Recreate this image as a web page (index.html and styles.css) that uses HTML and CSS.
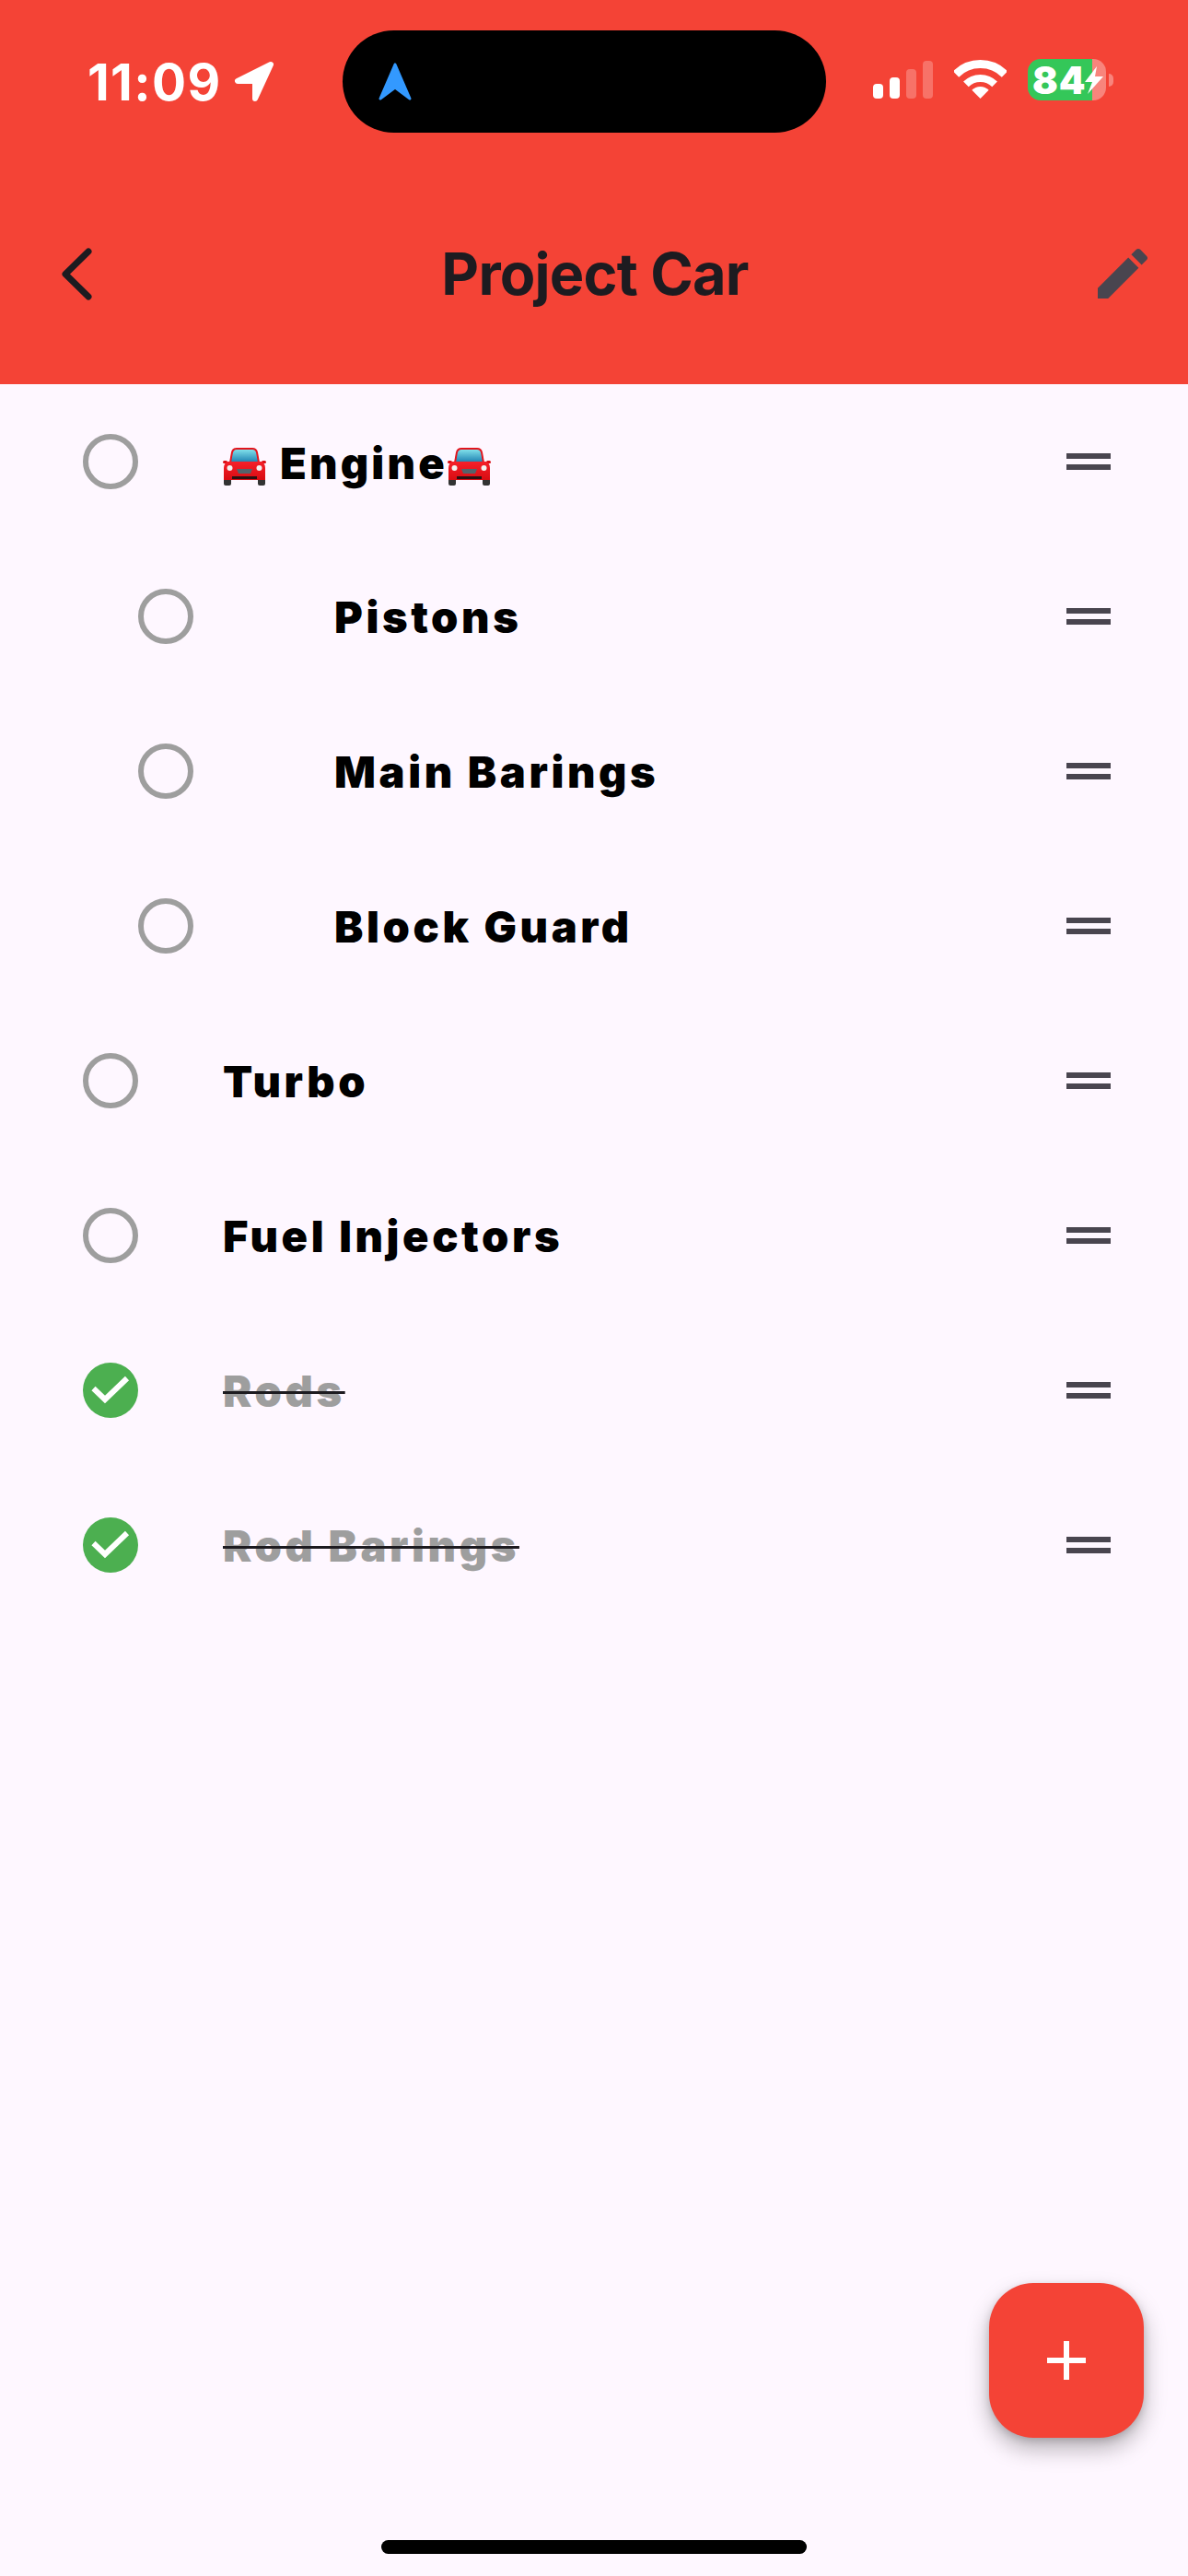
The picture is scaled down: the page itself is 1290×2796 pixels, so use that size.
FILE: index.html
```html
<!DOCTYPE html>
<html lang="en">
<head>
  <meta charset="UTF-8">
  <meta name="viewport" content="width=device-width, initial-scale=1.0">
  <title>Project Car</title>
  <link rel="stylesheet" href="styles.css">
</head>
<body>
  <svg class="defs" width="0" height="0">
    <defs>
      <linearGradient id="glass" x1="0" y1="0" x2="0" y2="1">
        <stop offset="0" stop-color="#7fe0ea"/>
        <stop offset="1" stop-color="#1c7fb0"/>
      </linearGradient>
      <linearGradient id="paint" x1="0" y1="0" x2="0" y2="1">
        <stop offset="0" stop-color="#f5202a"/>
        <stop offset="1" stop-color="#d80c12"/>
      </linearGradient>
      <symbol id="car" viewBox="0 0 47 42">
        <rect x="1" y="33" width="8" height="9" rx="2" fill="#333"/>
        <rect x="38" y="33" width="8" height="9" rx="2" fill="#333"/>
        <path d="M7 17 L9 6 Q10 1 15 1 L32 1 Q37 1 38 6 L40 17 Z" fill="#e3141c"/>
        <path d="M9 17 L11 6 Q12 3 15 3 L32 3 Q35 3 36 6 L38 17 Z" fill="url(#glass)"/>
        <rect x="0" y="15" width="5" height="3" rx="1.5" fill="#d80c12"/>
        <rect x="42" y="15" width="5" height="3" rx="1.5" fill="#d80c12"/>
        <path d="M5 16 L42 16 Q46 18 46 23 L46 36 L1 36 L1 23 Q1 18 5 16 Z" fill="url(#paint)"/>
        <circle cx="7.5" cy="23" r="3" fill="#f2f2f2"/>
        <circle cx="39.5" cy="23" r="3" fill="#f2f2f2"/>
        <path d="M15 24 L32 24 L30 29 L17 29 Z" fill="#55636b"/>
        <rect x="10" y="32" width="27" height="3" fill="#2a1212"/>
      </symbol>
      <symbol id="check-off" viewBox="0 0 60 60">
        <circle cx="30" cy="30" r="27" fill="none" stroke="#9e9e9e" stroke-width="6"/>
      </symbol>
      <symbol id="check-on" viewBox="0 0 60 60">
        <circle cx="30" cy="30" r="30" fill="#4caf50"/>
        <path d="M11.5 28 L24 40 L48 17" fill="none" stroke="#fff" stroke-width="6"/>
      </symbol>
    </defs>
  </svg>

  <div class="screen">
    <header class="app-header">
      <div class="status-bar">
        <div class="clock">
          <span class="time">11:09</span>
          <svg class="loc" width="46" height="45" viewBox="0 0 46 45">
            <path d="M40 4 L4 22 L23 22 L23 41 Z" fill="#fff" stroke="#fff" stroke-width="6" stroke-linejoin="round"/>
          </svg>
        </div>
        <div class="island">
          <svg width="38" height="42" viewBox="0 0 38 42">
            <path d="M19 2 L3 39 L19 27 L35 39 Z" fill="#3399ff" stroke="#3399ff" stroke-width="3" stroke-linejoin="round"/>
          </svg>
        </div>
        <div class="signal">
          <span class="bar b1"></span>
          <span class="bar b2"></span>
          <span class="bar b3 dim"></span>
          <span class="bar b4 dim"></span>
        </div>
        <svg class="wifi" width="57" height="42" viewBox="0 0 57 42">
          <path d="M2 15.5 A37.5 37.5 0 0 1 55 15.5" fill="none" stroke="#fff" stroke-width="9"/>
          <path d="M12.9 26.4 A22 22 0 0 1 44.1 26.4" fill="none" stroke="#fff" stroke-width="8"/>
          <path d="M28.5 42 L19.3 32.8 A13 13 0 0 1 37.7 32.8 Z" fill="#fff"/>
        </svg>
        <div class="battery">
          <span class="pct">84</span>
          <svg class="bolt" width="20" height="30" viewBox="0 0 20 30">
            <path d="M13 0 L0 17 L8 17 L3 30 L20 11 L11 11 Z" fill="#fff"/>
          </svg>
        </div>
        <span class="battery-cap"></span>
      </div>

      <div class="nav">
        <button class="icon-btn">
          <svg width="33" height="57" viewBox="0 0 33 57">
            <path d="M29 4 L4 28.5 L29 53" fill="none" stroke="#1d1b20" stroke-width="7" stroke-linecap="round" stroke-linejoin="round"/>
          </svg>
        </button>
        <h1 class="title">Project Car</h1>
        <button class="icon-btn">
          <svg width="72" height="72" viewBox="0 0 24 24">
            <path fill="#49454f" d="M3 17.25V21h3.75L17.81 9.94l-3.75-3.75L3 17.25zM20.71 7.04c.39-.39.39-1.02 0-1.41l-2.34-2.34c-.39-.39-1.02-.39-1.41 0l-1.83 1.83 3.75 3.75 1.83-1.83z"/>
          </svg>
        </button>
      </div>
    </header>

    <ul class="todo-list">
      <li class="todo">
        <svg class="check"><use href="#check-off"/></svg>
        <span class="label label-emoji">
          <svg class="car"><use href="#car"/></svg>
          <span class="engine">Engine</span>
          <svg class="car"><use href="#car"/></svg>
        </span>
        <span class="handle"></span>
      </li>
      <li class="todo sub">
        <svg class="check"><use href="#check-off"/></svg>
        <span class="label">Pistons</span>
        <span class="handle"></span>
      </li>
      <li class="todo sub">
        <svg class="check"><use href="#check-off"/></svg>
        <span class="label">Main Barings</span>
        <span class="handle"></span>
      </li>
      <li class="todo sub">
        <svg class="check"><use href="#check-off"/></svg>
        <span class="label">Block Guard</span>
        <span class="handle"></span>
      </li>
      <li class="todo">
        <svg class="check"><use href="#check-off"/></svg>
        <span class="label">Turbo</span>
        <span class="handle"></span>
      </li>
      <li class="todo">
        <svg class="check"><use href="#check-off"/></svg>
        <span class="label">Fuel Injectors</span>
        <span class="handle"></span>
      </li>
      <li class="todo done">
        <svg class="check"><use href="#check-on"/></svg>
        <span class="label"><s>Rods</s></span>
        <span class="handle"></span>
      </li>
      <li class="todo done">
        <svg class="check"><use href="#check-on"/></svg>
        <span class="label"><s>Rod Barings</s></span>
        <span class="handle"></span>
      </li>
    </ul>

    <button class="fab">
      <svg width="72" height="72" viewBox="0 0 24 24">
        <path fill="#fff" d="M19 13h-6v6h-2v-6H5v-2h6V5h2v6h6v2z"/>
      </svg>
    </button>
    <div class="home-bar"></div>
  </div>
</body>
</html>
```

FILE: styles.css
```css
* {
  margin: 0;
  padding: 0;
  box-sizing: border-box;
}

body {
  background: #fef7ff;
  font-family: Inter, 'Liberation Sans', sans-serif;
  overflow: hidden;
}

.defs {
  display: block;
}

.screen {
  position: relative;
  width: 1290px;
  height: 2796px;
  overflow: hidden;
}

.app-header {
  background: #f44336;
  height: 417px;
  padding-top: 33px;
}

.status-bar {
  display: flex;
  align-items: flex-start;
  height: 111px;
  padding-left: 95px;
}

.clock {
  display: flex;
  align-items: center;
  width: 277px;
  height: 111px;
  gap: 13px;
}

.time {
  color: #fff;
  font-size: 55px;
  font-weight: 700;
  letter-spacing: 1.4px;
}

.island {
  display: flex;
  align-items: center;
  width: 525px;
  height: 111px;
  padding-left: 38px;
  background: #000;
  border-radius: 56px;
}

.signal {
  display: flex;
  align-items: flex-end;
  gap: 7px;
  height: 41px;
  margin: 33px 0 0 51px;
}

.bar {
  width: 11px;
  background: #fff;
  border-radius: 4px;
}

.bar.dim {
  background: rgba(255, 255, 255, 0.25);
}

.b1 { height: 16px; }
.b2 { height: 23px; }
.b3 { height: 32px; }
.b4 { height: 41px; }

.wifi {
  margin: 32px 0 0 23px;
}

.battery {
  display: flex;
  align-items: center;
  width: 85px;
  height: 45px;
  margin: 31px 0 0 23px;
  padding-left: 5px;
  background: linear-gradient(90deg, #34c759 70px, rgba(255, 255, 255, 0.35) 70px);
  border-radius: 14px;
}

.pct {
  color: #fff;
  font-size: 41px;
  font-weight: 900;
  letter-spacing: 1px;
  width: 57px;
}

.battery-cap {
  width: 5px;
  height: 14px;
  margin: 47px 0 0 3px;
  background: rgba(255, 255, 255, 0.35);
  border-radius: 0 7px 7px 0;
}

.nav {
  display: flex;
  align-items: center;
  justify-content: space-between;
  height: 88px;
  margin-top: 109px;
  padding: 0 35px 0 67px;
}

.icon-btn {
  display: flex;
  background: none;
  border: none;
}

.title {
  margin-left: 9px;
  color: #1d1b20;
  font-size: 63px;
  font-weight: 700;
  letter-spacing: -0.8px;
}

.todo-list {
  list-style: none;
}

.todo {
  display: flex;
  align-items: center;
  height: 168px;
  padding: 0 84px 0 90px;
}

.todo.sub {
  padding-left: 150px;
}

.check {
  flex: none;
  width: 60px;
  height: 60px;
}

.label {
  flex: 1;
  margin-left: 92px;
  color: #000;
  font-size: 47px;
  font-weight: 900;
  letter-spacing: 3.6px;
}

.sub .label {
  margin-left: 153px;
}

.label-emoji {
  display: flex;
  align-items: center;
  padding-top: 3px;
}

.engine {
  margin: 0 0 0 15px;
  letter-spacing: 3.2px;
}

.car {
  width: 47px;
  height: 42px;
  margin-top: 7px;
}

.done .label {
  color: #9e9e9e;
}

.done s {
  text-decoration-color: #1d1b20;
  text-decoration-thickness: 3px;
}

.handle {
  flex: none;
  width: 48px;
  height: 18px;
  border-top: 6px solid #49454f;
  border-bottom: 6px solid #49454f;
}

.fab {
  position: absolute;
  left: 1074px;
  top: 2478px;
  display: flex;
  align-items: center;
  justify-content: center;
  width: 168px;
  height: 168px;
  background: #f44336;
  border: none;
  border-radius: 48px;
  box-shadow: 0 12px 24px rgba(0, 0, 0, 0.28), 0 3px 9px rgba(0, 0, 0, 0.15);
}

.home-bar {
  position: absolute;
  left: 414px;
  top: 2757px;
  width: 462px;
  height: 15px;
  background: #000;
  border-radius: 8px;
}
```
